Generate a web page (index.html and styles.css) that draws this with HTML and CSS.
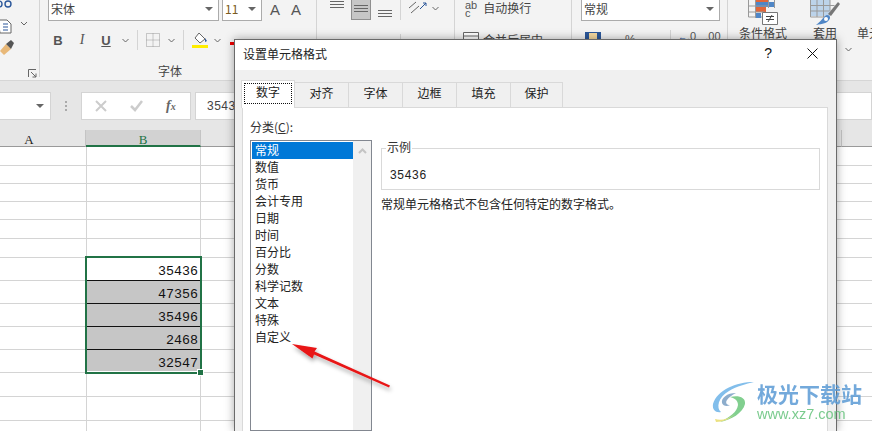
FILE: index.html
```html
<!DOCTYPE html>
<html lang="zh-CN">

<head>
  <meta charset="UTF-8">
  <title>设置单元格格式</title>
  <link rel="stylesheet" href="styles.css">
</head>

<body>
  <div class="app">
    <div class="ribbon">
      <div class="group clipGroup">
        <svg class="clipIcons" width="38" height="60" viewBox="0 0 38 60">
          <circle cx="-1" cy="4" r="3" fill="none" stroke="#2b579a" stroke-width="1.4" />
          <circle cx="8" cy="4" r="3" fill="none" stroke="#2b579a" stroke-width="1.4" />
          <path d="M-2 20h9l4 4v9h-11z" fill="#fff" stroke="#666" />
          <path d="M3 24h5M3 27h5M3 30h5" stroke="#2b579a" />
          <path d="M21 22l3 3 3-3" fill="none" stroke="#666" />
          <path d="M0 51l6-7 5 5-7 6z" fill="#e8b878" />
          <path d="M6 44l5-4 3 3-3 6z" fill="#555" />
        </svg>
        <svg class="launcher" width="9" height="9" viewBox="0 0 9 9">
          <path d="M.5 8V.5H8M3 3l5 5M8 4.500V8H4.500" fill="none" stroke="#666" />
        </svg>
      </div>

      <div class="group fontGroup">
        <div class="row">
          <div class="combo fontName">宋体<i class="caret"></i></div>
          <div class="combo fontSize">11<i class="caret"></i></div>
          <span class="growA">A</span>
          <span class="growA">A</span>
        </div>
        <div class="row fontTools">
          <b class="tool">B</b>
          <i class="tool toolI">I</i>
          <u class="tool toolU">U</u>
          <svg class="chev chevNear" width="7" height="5" viewBox="0 0 7 5"><path d="M.5 1l3 3 3-3" fill="none" stroke="#666" /></svg>
          <span class="toolSep"></span>
          <svg width="14" height="14" viewBox="0 0 14 14">
            <path d="M.5.500h13v13H.5zM7 .5v13M.5 7h13" fill="none" stroke="#999" stroke-dasharray="1 1" />
          </svg>
          <svg class="chev" width="7" height="5" viewBox="0 0 7 5"><path d="M.5 1l3 3 3-3" fill="none" stroke="#666" /></svg>
          <span class="toolSep"></span>
          <svg width="16" height="16" viewBox="0 0 16 16">
            <path d="M7 1l6 6-5 4-5-5z" fill="#fff" stroke="#666" />
            <path d="M13 6l2 3-2 1z" fill="#2b579a" />
            <path d="M0 13h16v3H0z" fill="#ffee00" />
          </svg>
          <svg class="chev chevNear" width="7" height="5" viewBox="0 0 7 5"><path d="M.5 1l3 3 3-3" fill="none" stroke="#666" /></svg>
          <span class="redBar"></span>
        </div>
        <div class="groupName">字体</div>
      </div>

      <div class="group alignGroup">
        <div class="row alignRow1">
          <svg width="14" height="9" viewBox="0 0 14 9"><path d="M0 1.500h14M0 4.500h14M0 7.500h14" stroke="#666" /></svg>
          <div class="alignOn"><svg width="14" height="9" viewBox="0 0 14 9"><path d="M0 1.500h14M0 4.500h14M0 7.500h14" stroke="#666" /></svg></div>
          <svg class="alignLow" width="14" height="9" viewBox="0 0 14 9"><path d="M0 1.500h14M0 4.500h14M0 7.500h14" stroke="#666" /></svg>
          <span class="toolSep"></span>
          <svg class="orient" width="20" height="16" viewBox="0 0 20 16">
            <path d="M1 8l7-6M3 13l8-7" stroke="#666" />
            <path d="M12 9l6-6M15 3h3v3" fill="none" stroke="#2b579a" />
          </svg>
          <svg class="orientChev" width="7" height="5" viewBox="0 0 7 5"><path d="M.5 1l3 3 3-3" fill="none" stroke="#666" /></svg>
        </div>
        <div class="row alignRow2">
          <svg width="14" height="6" viewBox="0 0 14 6"><path d="M0 .5h14M0 3.500h10" stroke="#666" /></svg>
          <svg width="14" height="6" viewBox="0 0 14 6"><path d="M0 .5h14M2 3.500h10" stroke="#666" /></svg>
          <svg width="14" height="6" viewBox="0 0 14 6"><path d="M0 .5h14M4 3.500h10" stroke="#666" /></svg>
          <span class="toolSep"></span>
          <svg width="16" height="6" viewBox="0 0 16 6"><path d="M5 .5h11M5 3.500h11" stroke="#666" /><path d="M0 3l3-2v4z" fill="#2b579a" /></svg>
          <svg width="16" height="6" viewBox="0 0 16 6"><path d="M0 .5h11M0 3.500h11" stroke="#666" /><path d="M16 3l-3-2v4z" fill="#2b579a" /></svg>
        </div>
      </div>

      <div class="group wrapGroup">
        <div class="row wrapRow">
          <span class="abc">ab<br>c</span>
          <span>自动换行</span>
        </div>
        <div class="row mergeRow">
          <svg width="16" height="12" viewBox="0 0 16 12"><path d="M.5.500h15v11H.5zM.5 4h15" fill="#fff" stroke="#666" /></svg>
          <span>合并后居中</span>
        </div>
      </div>

      <div class="group numGroup">
        <div class="combo numFormat">常规<i class="caret"></i></div>
        <div class="row numTools">
          <svg width="16" height="8" viewBox="0 0 16 8"><path d="M0 0h16v8H0z" fill="#2b579a" /><path d="M4 1h8v6H4z" fill="#f4d8a0" /></svg>
          <span class="pct">%</span>
          <span class="comma">,</span>
          <span class="toolSep"></span>
          <span class="dec"><em>←</em>.0</span>
          <span class="dec">.00</span>
        </div>
      </div>

      <div class="group styleGroup">
        <div class="styleBtn">
          <svg width="30" height="25" viewBox="0 0 30 25">
            <path d="M.5-1v18h28" fill="none" stroke="#999" />
            <path d="M8 0h12v5H8z" fill="#e0663a" />
            <path d="M8 2h18v5H8z" fill="#4f86c6" />
            <path d="M8 7h10v5H8z" fill="#e0663a" />
            <path d="M8 13h5v5H8z" fill="#4f86c6" />
            <path d="M.5 6h20M.5 12h16M7.500 0v18M20.500 0v8M26.500 0v8" fill="none" stroke="#999" />
            <path d="M14.500 12.500h15v12h-15z" fill="#fff" stroke="#777" />
            <path d="M18 16.500h8M18 19.500h8M20 22l4-7" fill="none" stroke="#444" />
          </svg>
          <span>条件格式</span>
        </div>
        <div class="styleBtn">
          <svg width="30" height="25" viewBox="0 0 30 25">
            <path d="M0 0h20v16H0z" fill="#bcd3ea" />
            <path d="M.5 0v17h19M.5 5.500h24M.5 11h19M7 0v17M13.500 0v17M20 0v11" fill="none" stroke="#999" />
            <path d="M28 2l2 2-9 12-3-2z" fill="#777" />
            <path d="M17 15c3 0 4 3 2 5-2 3-6 4-13 5 4-3 6-6 8-8 1-1 2-2 3-2z" fill="#4f86c6" />
            <circle cx="16" cy="19" r="2" fill="#fff" />
          </svg>
          <span>套用</span>
        </div>
        <div class="styleBtn cellBtn"><span>单元</span></div>
        <svg class="styleChev" width="7" height="5" viewBox="0 0 7 5"><path d="M.5 1l3 3 3-3" fill="none" stroke="#666" /></svg>
      </div>
    </div>

    <div class="formulaBar">
      <div class="nameBox"><i class="caret"></i></div>
      <div class="barDots"></div>
      <div class="fxBox">
        <svg width="12" height="12" viewBox="0 0 12 12"><path d="M1 1l10 10M11 1L1 11" stroke="#ccc" stroke-width="2" /></svg>
        <svg width="13" height="12" viewBox="0 0 13 12"><path d="M1 6l4 4 7-9" fill="none" stroke="#ccc" stroke-width="2.500" /></svg>
        <span class="fx">f<sub>x</sub></span>
      </div>
      <div class="formulaInput">35436</div>
    </div>

    <div class="colHeads">
      <div class="colHead colA">A</div>
      <div class="colHead colB">B</div>
      <div class="colHead colC"></div>
      <div class="colHead colD"></div>
    </div>

    <div class="sheet">
      <div class="gridRow r19"></div>
      <div class="gridRow r18"></div>
      <div class="gridRow r18"></div>
      <div class="gridRow r18"></div>
      <div class="gridRow r19"></div>
      <div class="gridRow r19"></div>
      <div class="gridRow"></div>
      <div class="gridRow"></div>
      <div class="gridRow"></div>
      <div class="gridRow"></div>
      <div class="gridRow"></div>
      <div class="gridRow r24"></div>
      <div class="gridRow r24"></div>

      <div class="selection">
        <div class="cell">35436</div>
        <div class="cell picked">47356</div>
        <div class="cell picked">35496</div>
        <div class="cell picked">2468</div>
        <div class="cell picked">32547</div>
        <span class="fillHandle"></span>
      </div>
    </div>
  </div>

  <div class="dialog">
    <div class="dlgTitle">
      <span>设置单元格格式</span>
      <span class="dlgHelp">?</span>
      <svg class="dlgClose" width="11" height="11" viewBox="0 0 11 11"><path d="M.5.500l10 10M10.500.5l-10 10" stroke="#111" /></svg>
    </div>
    <div class="dlgBody">
      <div class="tabs">
        <div class="tab tabOn"><span>数字</span></div>
        <div class="tab">对齐</div>
        <div class="tab">字体</div>
        <div class="tab">边框</div>
        <div class="tab">填充</div>
        <div class="tab tabLast">保护</div>
      </div>
      <div class="panel">
        <div class="catCol">
          <div class="catLabel">分类(<u>C</u>):</div>
          <div class="catList">
            <div class="catItems">
              <div class="catItem catOn">常规</div>
              <div class="catItem">数值</div>
              <div class="catItem">货币</div>
              <div class="catItem">会计专用</div>
              <div class="catItem">日期</div>
              <div class="catItem">时间</div>
              <div class="catItem">百分比</div>
              <div class="catItem">分数</div>
              <div class="catItem">科学记数</div>
              <div class="catItem">文本</div>
              <div class="catItem">特殊</div>
              <div class="catItem">自定义</div>
            </div>
            <div class="catScroll">
              <svg width="9" height="6" viewBox="0 0 9 6"><path d="M1 5l3.500-3.500L8 5" fill="none" stroke="#c4c4c4" stroke-width="2" /></svg>
            </div>
          </div>
        </div>
        <div class="detail">
          <div class="sampleBox">
            <div class="sampleTitle">示例</div>
            <div class="sampleValue">35436</div>
          </div>
          <div class="sampleNote">常规单元格格式不包含任何特定的数字格式。</div>
        </div>
      </div>
    </div>
  </div>

  <svg class="arrow" width="120" height="60" viewBox="285 338 120 60">
    <defs>
      <filter id="arrowShadow" x="-20%" y="-40%" width="140%" height="200%">
        <feDropShadow dx="1" dy="3" stdDeviation="2" flood-color="#000" flood-opacity=".35" />
      </filter>
    </defs>
    <path d="M292 344l25 4-2.500 3.500L390 385.500l-1 2-75-33-1.500 4z" fill="#e81416" filter="url(#arrowShadow)" />
  </svg>

  <div class="watermark">
    <svg width="44" height="42" viewBox="0 0 44 42">
      <path d="M42 1C24 1 5 9 1 23c-1 6 3 9 8 8C4 27 6 16 17 10 25 5 34 3 42 1z" fill="#6db3e8" />
      <path d="M24 12c-9 0-15 5-14 10 1 3 5 4 8 2-3 0-5-2-3-5 2-3 5-5 9-7z" fill="#7a9fc4" />
      <path d="M18 16c8-2 16 0 15 7-2 9-14 16-25 18 10-5 17-10 18-17 0-5-4-7-8-8z" fill="#6cc77c" />
      <path d="M3 38c6 2 14 0 20-5-5 5-12 8-19 8z" fill="#e8dc6a" />
    </svg>
    <div>
      <div class="wmName">极光下载站</div>
      <div class="wmUrl">www.xz7.com</div>
    </div>
  </div>
</body>

</html>
```

FILE: styles.css
```css
:root {
  --cjk: "Noto Sans CJK SC", "Liberation Sans", sans-serif;
  --ribbonBg: #f3f3f3;
  --lineColor: #d4d4d4;
  --excelGreen: #217346;
}

html,
body {
  margin: 0;
  height: 431px;
  overflow: hidden;
  background: #fff;
  font-family: var(--cjk);
  font-size: 12px;
  color: #333;
}

.app {
  width: 872px;
}

/* ribbon */

.ribbon {
  display: flex;
  height: 81px;
  box-sizing: border-box;
  background: var(--ribbonBg);
  border-bottom: 1px solid #d6d6d6;
}

.group {
  position: relative;
  height: 77px;
  box-sizing: border-box;
  border-right: 1px solid #d4d4d4;
}

.row {
  display: flex;
  align-items: center;
}

.combo {
  display: flex;
  align-items: center;
  justify-content: space-between;
  box-sizing: border-box;
  height: 21px;
  padding: 0 5px 2px 2px;
  background: #fff;
  border: 1px solid #ababab;
  border-top: 0;
  font-size: 12px;
  line-height: 16px;
  color: #444;
}

.caret {
  width: 0;
  height: 0;
  border-left: 4px solid transparent;
  border-right: 4px solid transparent;
  border-top: 4px solid #666;
}

.chev {
  margin-left: 8px;
}

.chevNear {
  margin-left: 6px;
}

.toolSep {
  width: 1px;
  height: 20px;
  background: #d4d4d4;
}

.clipGroup {
  width: 40px;
}

.clipIcons {
  display: block;
}

.launcher {
  position: absolute;
  left: 28px;
  top: 69px;
}

.fontGroup {
  width: 277px;
  padding-left: 8px;
}

.fontName {
  width: 171px;
}

.fontSize {
  width: 40px;
  margin-left: 3px;
  color: #7a5a20;
}

.growA {
  margin: -3px 0 0 8px;
  font: 15px "Liberation Sans", sans-serif;
  color: #555;
}

.growA + .growA {
  margin-left: 11px;
}

.fontTools {
  margin-top: 9px;
  height: 20px;
  color: #555;
}

.tool {
  width: 20px;
  text-align: center;
  font-family: "Liberation Sans", sans-serif;
  font-size: 13px;
}

.toolI {
  margin-left: 4px;
  font-family: "Liberation Serif", serif;
  font-size: 14px;
}

.toolU {
  margin-left: 4px;
  font-weight: 700;
}

.fontTools .toolSep {
  margin: 0 8px;
}

.redBar {
  width: 6px;
  height: 3px;
  margin: 7px 0 0 9px;
  background: #e00;
}

.groupName {
  position: absolute;
  left: 118px;
  top: 62px;
  font-size: 12px;
  color: #444;
}

.alignGroup {
  width: 138px;
  padding-left: 13px;
}

.alignRow1 {
  align-items: flex-start;
  height: 20px;
}

.alignOn {
  display: flex;
  align-items: center;
  justify-content: center;
  box-sizing: border-box;
  width: 20px;
  height: 20px;
  margin-left: 7px;
  padding-bottom: 2px;
  background: #c6c6c6;
  border: 1px solid #8f8f8f;
  border-top: 0;
}

.alignLow {
  margin: 9px 0 0 7px;
}

.alignRow1 .toolSep {
  margin-left: 8px;
}

.orient {
  margin-left: 7px;
}

.orientChev {
  margin: 6px 0 0 4px;
}

.alignRow2 {
  margin-top: 14px;
}

.alignRow2 svg:nth-child(2) {
  margin-left: 9px;
}

.alignRow2 svg:nth-child(3) {
  margin-left: 11px;
}

.alignRow2 .toolSep {
  margin: 0 7px 0 8px;
}

.alignRow2 svg:nth-child(6) {
  margin-left: 8px;
}

.wrapGroup {
  width: 117px;
  padding-left: 10px;
  font-size: 12px;
  line-height: 16px;
  color: #444;
}

.wrapRow {
  align-items: flex-start;
  gap: 6px;
  height: 20px;
}

.abc {
  padding-top: 1px;
  font: 11px/8px "Liberation Sans", sans-serif;
  color: #555;
}

.mergeRow {
  align-items: flex-start;
  gap: 4px;
  margin: 12px 0 0 -2px;
}

.numGroup {
  width: 156px;
  padding-left: 9px;
}

.numFormat {
  width: 139px;
}

.numTools {
  align-items: flex-start;
  margin-top: 11px;
  padding-left: 4px;
  font: 12px/16px "Liberation Sans", sans-serif;
  color: #555;
}

.pct {
  margin-left: 24px;
}

.comma {
  margin-left: 18px;
}

.numTools .toolSep {
  height: 10px;
  margin: -2px 0 0 13px;
}

.dec {
  margin: -4px 0 0 7px;
  font-size: 11px;
}

.dec em {
  font-style: normal;
  font-size: 9px;
  color: #2b579a;
}

.dec + .dec {
  margin-left: 9px;
}

.styleGroup {
  display: flex;
  flex: 1;
  overflow: hidden;
  border-right: 0;
  padding-left: 11px;
  gap: 23px;
}

.styleBtn {
  display: flex;
  flex-direction: column;
  align-items: center;
  flex: none;
  font-size: 12px;
  line-height: 16px;
  white-space: nowrap;
  color: #444;
}

.cellBtn {
  margin-left: -6px;
  padding-top: 25px;
}

.styleChev {
  position: absolute;
  left: 117px;
  top: 47px;
}

/* formula bar */

.formulaBar {
  display: flex;
  align-items: flex-start;
  height: 49px;
  box-sizing: border-box;
  padding-top: 11px;
  background: #e6e6e6;
}

.nameBox,
.fxBox,
.formulaInput {
  display: flex;
  align-items: center;
  box-sizing: border-box;
  height: 28px;
  background: #fff;
  border: 1px solid #d4d4d4;
}

.nameBox {
  justify-content: flex-end;
  width: 51px;
  padding-right: 6px;
  border-left: 0;
}

.barDots {
  width: 2px;
  height: 10px;
  margin: 9px 14px 0 14px;
  background: repeating-linear-gradient(#aaa 0 2px, transparent 2px 4px);
}

.fxBox {
  gap: 23px;
  width: 110px;
  padding-left: 13px;
}

.fx {
  font: italic 700 14px "Liberation Serif", serif;
  color: #666;
}

.fx sub {
  font-size: 10px;
  vertical-align: baseline;
}

.formulaInput {
  flex: 1;
  margin-left: 4px;
  padding-left: 11px;
  font: 12px "Liberation Sans", sans-serif;
  letter-spacing: .5px;
  color: #444;
}

/* sheet */

.colHeads {
  display: flex;
  height: 17px;
}

.colHead {
  box-sizing: border-box;
  background: #e6e6e6;
  border-right: 1px solid #c4c4c4;
  border-bottom: 1px solid #9a9a9a;
  text-align: center;
  font: 13px/19px "Liberation Serif", serif;
  color: #222;
}

.colA {
  width: 86px;
  padding-right: 27px;
}

.colB {
  width: 115px;
  background: #d2d2d2;
  border-bottom: 2px solid var(--excelGreen);
  color: var(--excelGreen);
}

.colC {
  width: 641px;
}

.colD {
  flex: 1;
  border-right: 0;
}

.sheet {
  position: relative;
  height: 284px;
  overflow: hidden;
  background: linear-gradient(to right, transparent 86px, var(--lineColor) 86px 87px, transparent 87px 200px, var(--lineColor) 200px 201px, transparent 201px);
}

.gridRow {
  box-sizing: border-box;
  height: 23px;
  border-bottom: 1px solid var(--lineColor);
}

.r18 {
  height: 18px;
}

.r19 {
  height: 19px;
}

.r24 {
  height: 24px;
}

.selection {
  position: absolute;
  left: 85px;
  top: 109px;
  width: 117px;
  height: 118px;
  box-sizing: border-box;
  background: #fff;
  border: 2px solid var(--excelGreen);
}

.cell {
  box-sizing: border-box;
  height: 23px;
  padding-right: 2px;
  text-align: right;
  font: 13.33px/27px "Liberation Mono", monospace;
  color: #111;
  overflow: hidden;
}

.cell:first-child {
  height: 22px;
}

.picked {
  background: #c6c6c6;
  border-top: 1px solid #111;
}

.cell:nth-child(5) {
  height: 22px;
}

.fillHandle {
  position: absolute;
  right: -4px;
  bottom: -4px;
  width: 5px;
  height: 5px;
  background: var(--excelGreen);
  border: 1px solid #fff;
}

/* dialog */

.dialog {
  position: absolute;
  left: 234px;
  top: 39px;
  width: 603px;
  height: 392px;
  box-sizing: border-box;
  overflow: hidden;
  background: #f0f0f0;
  border: 1px solid #6a6a6a;
  border-bottom: 0;
  box-shadow: 0 0 9px rgba(0, 0, 0, .35);
}

.dlgTitle {
  display: flex;
  align-items: center;
  height: 26px;
  padding: 0 18px 4px 8px;
  background: #fff;
  font-size: 12px;
  color: #222;
}

.dlgHelp {
  margin-left: auto;
  margin-right: 35px;
  font: 14px "Liberation Sans", sans-serif;
  color: #111;
}

.dlgBody {
  padding: 9px 8px 0 7px;
}

.tabs {
  display: flex;
  height: 28px;
  margin-left: -1px;
  align-items: flex-end;
}

.tab {
  box-sizing: border-box;
  width: 55px;
  height: 25px;
  margin-left: -1px;
  background: #f0f0f0;
  border: 1px solid #d9d9d9;
  border-bottom: 0;
  text-align: center;
  line-height: 19px;
  font-size: 12px;
  color: #222;
}

.tabLast {
  width: 53px;
}

.tabOn {
  position: relative;
  z-index: 1;
  width: 54px;
  height: 28px;
  margin-left: 0;
  margin-bottom: -1px;
  padding: 2px;
  background: #fff;
}

.tabOn span {
  display: block;
  box-sizing: border-box;
  height: 21px;
  line-height: 16px;
  border: 1px dotted #111;
}

.panel {
  display: flex;
  gap: 9px;
  box-sizing: border-box;
  height: 324px;
  padding: 11px 7px 0 7px;
  background: #fff;
  border: 1px solid #d9d9d9;
  border-bottom: 0;
}

.catCol {
  width: 122px;
}

.catLabel {
  height: 21px;
  line-height: 16px;
  color: #333;
}

.catList {
  display: flex;
  height: 291px;
  box-sizing: border-box;
  border: 1px solid #828790;
}

.catItems {
  width: 101px;
  padding: 1px 0 0 1px;
}

.catItem {
  height: 17px;
  line-height: 16px;
  padding-left: 3px;
  box-sizing: border-box;
  color: #222;
}

.catOn {
  background: #0078d7;
  color: #fff;
}

.catScroll {
  flex: 1;
  display: flex;
  justify-content: center;
  align-items: flex-start;
  padding-top: 7px;
  background: #f0f0f0;
}

.detail {
  flex: 1;
  padding-top: 29px;
}

.sampleBox {
  position: relative;
  height: 42px;
  box-sizing: border-box;
  border: 1px solid #d9d9d9;
  padding: 18px 0 0 8px;
}

.sampleTitle {
  position: absolute;
  left: 4px;
  top: -10px;
  padding: 0 1px;
  background: #fff;
  line-height: 16px;
}

.sampleValue {
  font: 12px/16px "Liberation Sans", sans-serif;
  letter-spacing: .7px;
  color: #222;
}

.sampleNote {
  margin-top: 6px;
  line-height: 16px;
  color: #222;
}

/* overlays */

.arrow {
  position: absolute;
  left: 285px;
  top: 338px;
}

.watermark {
  position: absolute;
  left: 712px;
  top: 381px;
  display: flex;
  gap: 1px;
  opacity: .85;
}

.wmName {
  font-size: 21px;
  font-weight: 700;
  line-height: 25px;
  color: #5b9bd5;
}

.wmUrl {
  font: 14.500px/17px "Liberation Sans", sans-serif;
  color: #63c27a;
}
```
